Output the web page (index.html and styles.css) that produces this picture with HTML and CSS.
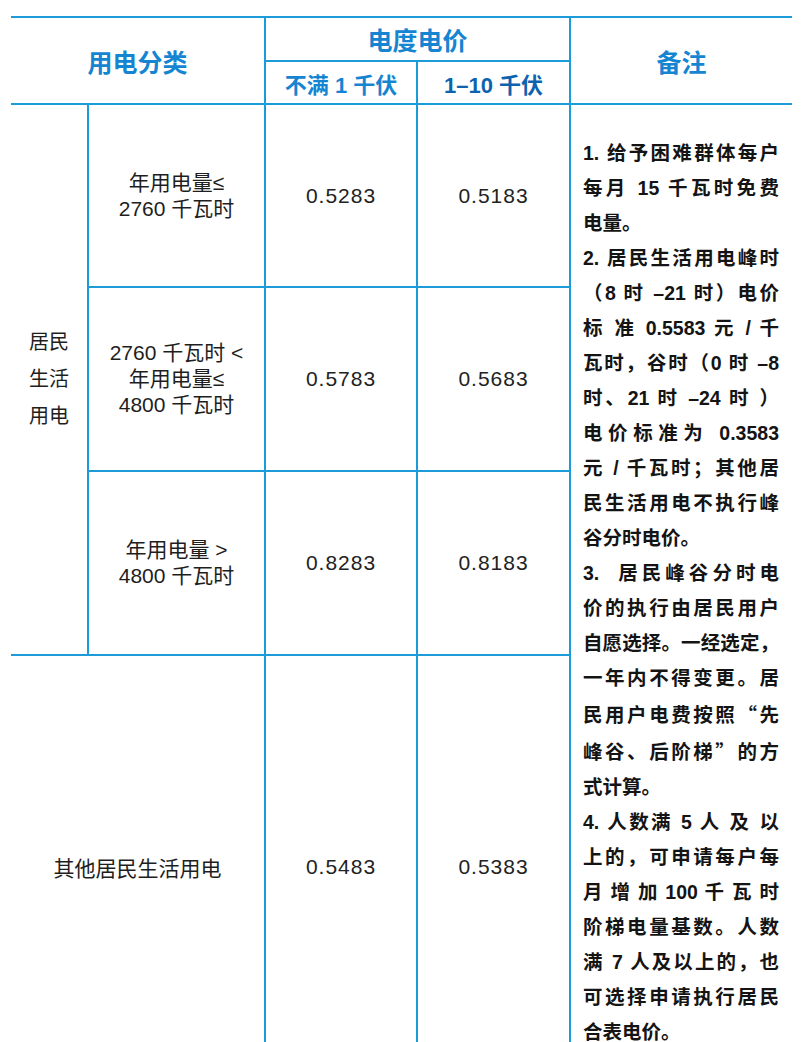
FILE: index.html
```html
<!DOCTYPE html>
<html lang="zh-CN">
<head>
<meta charset="utf-8">
<title>电价表</title>
<link rel="stylesheet" href="styles.css">
</head>
<body>
<div class="table">
  <div class="cell head h-cat">用电分类</div>
  <div class="cell head h-price">电度电价</div>
  <div class="cell head h-note">备注</div>
  <div class="cell head sub h-low">不满 1 千伏</div>
  <div class="cell head sub h-mid">1–10 千伏</div>

  <div class="cell res">居民<br>生活<br>用电</div>

  <div class="cell tier r1">年用电量≤<br>2760 千瓦时</div>
  <div class="cell num r1 c3">0.5283</div>
  <div class="cell num r1 c4">0.5183</div>

  <div class="cell tier r2">2760 千瓦时 &lt;<br>年用电量≤<br>4800 千瓦时</div>
  <div class="cell num r2 c3">0.5783</div>
  <div class="cell num r2 c4">0.5683</div>

  <div class="cell tier r3">年用电量 &gt;<br>4800 千瓦时</div>
  <div class="cell num r3 c3">0.8283</div>
  <div class="cell num r3 c4">0.8183</div>

  <div class="cell other">其他居民生活用电</div>
  <div class="cell num r4 c3">0.5483</div>
  <div class="cell num r4 c4">0.5383</div>

  <div class="cell note">
    <div class="ln">1. 给予困难群体每户</div>
    <div class="ln">每月 15 千瓦时免费</div>
    <div class="ln end">电量。</div>
    <div class="ln">2. 居民生活用电峰时</div>
    <div class="ln">（8 时 –21 时）电价</div>
    <div class="ln">标 准 0.5583 元 / 千</div>
    <div class="ln">瓦时，谷时（0 时 –8</div>
    <div class="ln">时、21 时 –24 时 ）</div>
    <div class="ln">电价标准为 0.3583</div>
    <div class="ln">元 / 千瓦时；其他居</div>
    <div class="ln">民生活用电不执行峰</div>
    <div class="ln end">谷分时电价。</div>
    <div class="ln">3.&nbsp; 居民峰谷分时电</div>
    <div class="ln">价的执行由居民用户</div>
    <div class="ln">自愿选择。一经选定，</div>
    <div class="ln">一年内不得变更。居</div>
    <div class="ln">民用户电费按照<span class="q">“</span>先</div>
    <div class="ln">峰谷、后阶梯<span class="q">”</span>的方</div>
    <div class="ln end">式计算。</div>
    <div class="ln">4. 人数满 5 人 及 以</div>
    <div class="ln">上的，可申请每户每</div>
    <div class="ln">月 增 加 100 千 瓦 时</div>
    <div class="ln">阶梯电量基数。人数</div>
    <div class="ln">满 7 人及以上的，也</div>
    <div class="ln">可选择申请执行居民</div>
    <div class="ln end">合表电价。</div>
  </div>
</div>
</body>
</html>
```

FILE: styles.css
```css
html, body {
  margin: 0;
  padding: 0;
  background: #ffffff;
}

body {
  padding: 16px 11px 0 11px;
  font-family: "Liberation Sans", "Noto Sans CJK SC", sans-serif;
  color: #1e1e1e;
}

.table {
  width: 781px;
  display: grid;
  grid-template-columns: 76px 175px 150px 151px 221px;
  grid-template-rows: 42px 41px 181px 182px 182px 421px;
  gap: 2px;
  padding-top: 2px;
  background: #1b9bd8;
}

.cell {
  background: #ffffff;
  display: flex;
  align-items: center;
  justify-content: center;
  text-align: center;
}

.head {
  color: #1585d2;
  font-weight: bold;
  font-size: 25px;
  font-family: "Noto Sans CJK SC", sans-serif;
}

.head.sub {
  font-size: 22px;
  font-family: "Liberation Sans", "Noto Sans CJK SC", sans-serif;
}

.h-cat { grid-column: 1 / 3; grid-row: 1 / 3; }
.h-price { grid-column: 3 / 5; grid-row: 1; }
.h-note { grid-column: 5; grid-row: 1 / 3; }
.h-low { grid-column: 3; grid-row: 2; }
.h-mid { grid-column: 4; grid-row: 2; color: #0d63b0; }

.res {
  grid-column: 1;
  grid-row: 3 / 6;
  font-size: 20px;
  line-height: 37px;
}

.tier {
  grid-column: 2;
  font-size: 21px;
  line-height: 26px;
}

.r1 { grid-row: 3; }
.r2 { grid-row: 4; }
.r3 { grid-row: 5; }
.r4 { grid-row: 6; }
.c3 { grid-column: 3; }
.c4 { grid-column: 4; }

.num {
  font-size: 21px;
  letter-spacing: 1px;
  color: #222222;
}

.other {
  grid-column: 1 / 3;
  grid-row: 6;
  font-size: 21px;
}

.note {
  grid-column: 5;
  grid-row: 3 / 7;
  display: block;
  text-align: left;
  padding: 31px 13px 0 12px;
  font-size: 19.5px;
  line-height: 35px;
  font-weight: bold;
  color: #141414;
  font-family: "Liberation Sans", "Noto Sans CJK SC", sans-serif;
}

.ln {
  text-align: justify;
  text-align-last: justify;
  text-justify: inter-character;
}

.ln.end {
  text-align: left;
  text-align-last: left;
}

.q {
  font-family: "Noto Sans CJK SC", sans-serif;
  display: inline-block;
  width: 1em;
  text-align: center;
}
```
